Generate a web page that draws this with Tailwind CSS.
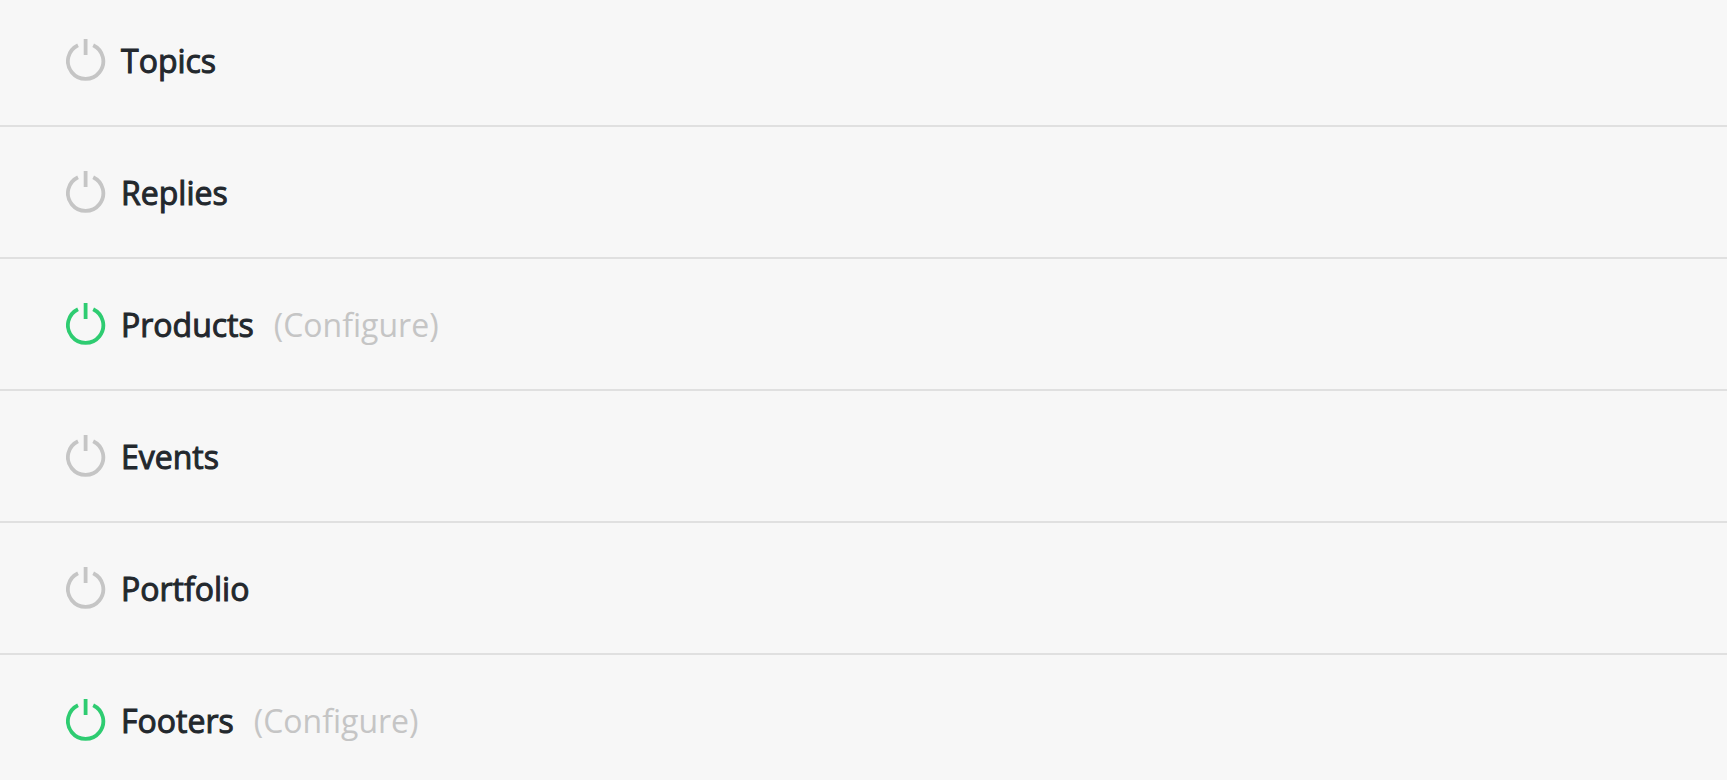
<!DOCTYPE html>
<html lang="en">

<head>
    <meta charset="UTF-8">
    <meta name="viewport" content="width=device-width, initial-scale=1.0">
    <title>Modules</title>
    <script src="https://cdn.jsdelivr.net/npm/@tailwindcss/browser@4"></script>
</head>

<body class="bg-[#f7f7f7] font-['Segoe_UI','Open_Sans','Noto_Sans',sans-serif] text-[32px] leading-11 text-[#23282d]">
    <!-- Power icon shared by every row -->
    <svg class="hidden">
        <symbol id="power" viewBox="0 0 40 44" fill="none" stroke="currentColor" stroke-width="3.8">
            <path d="M12 6.2A17.7 17.7 0 1 0 27.2 6.2" />
            <path d="M19.6 0V16" />
        </symbol>
    </svg>

    <ul>
        <li class="flex items-center border-b-2 border-[#e0e0e0] pt-[39px] pb-[42px] pl-[66px]">
            <button type="button" aria-label="Activate Topics" class="mr-[15px] text-[#c5c5c5]">
                <svg class="block h-11 w-10"><use href="#power" /></svg>
            </button>
            <span class="[-webkit-text-stroke:1px]">Topics</span>
        </li>
        <li class="flex items-center border-b-2 border-[#e0e0e0] pt-11 pb-[42px] pl-[66px]">
            <button type="button" aria-label="Activate Replies" class="mr-[15px] text-[#c5c5c5]">
                <svg class="block h-11 w-10"><use href="#power" /></svg>
            </button>
            <span class="[-webkit-text-stroke:1px]">Replies</span>
        </li>
        <li class="flex items-center border-b-2 border-[#e0e0e0] pt-11 pb-[42px] pl-[66px]">
            <button type="button" aria-label="Deactivate Products" class="mr-[15px] text-[#2ecc71]">
                <svg class="block h-11 w-10"><use href="#power" /></svg>
            </button>
            <span class="[-webkit-text-stroke:1px]">Products</span>
            <a href="#" class="ml-5 text-[#c5c5c5]">(Configure)</a>
        </li>
        <li class="flex items-center border-b-2 border-[#e0e0e0] pt-11 pb-[42px] pl-[66px]">
            <button type="button" aria-label="Activate Events" class="mr-[15px] text-[#c5c5c5]">
                <svg class="block h-11 w-10"><use href="#power" /></svg>
            </button>
            <span class="[-webkit-text-stroke:1px]">Events</span>
        </li>
        <li class="flex items-center border-b-2 border-[#e0e0e0] pt-11 pb-[42px] pl-[66px]">
            <button type="button" aria-label="Activate Portfolio" class="mr-[15px] text-[#c5c5c5]">
                <svg class="block h-11 w-10"><use href="#power" /></svg>
            </button>
            <span class="[-webkit-text-stroke:1px]">Portfolio</span>
        </li>
        <li class="flex items-center pt-11 pb-8 pl-[66px]">
            <button type="button" aria-label="Deactivate Footers" class="mr-[15px] text-[#2ecc71]">
                <svg class="block h-11 w-10"><use href="#power" /></svg>
            </button>
            <span class="[-webkit-text-stroke:1px]">Footers</span>
            <a href="#" class="ml-5 text-[#c5c5c5]">(Configure)</a>
        </li>
    </ul>
</body>

</html>
